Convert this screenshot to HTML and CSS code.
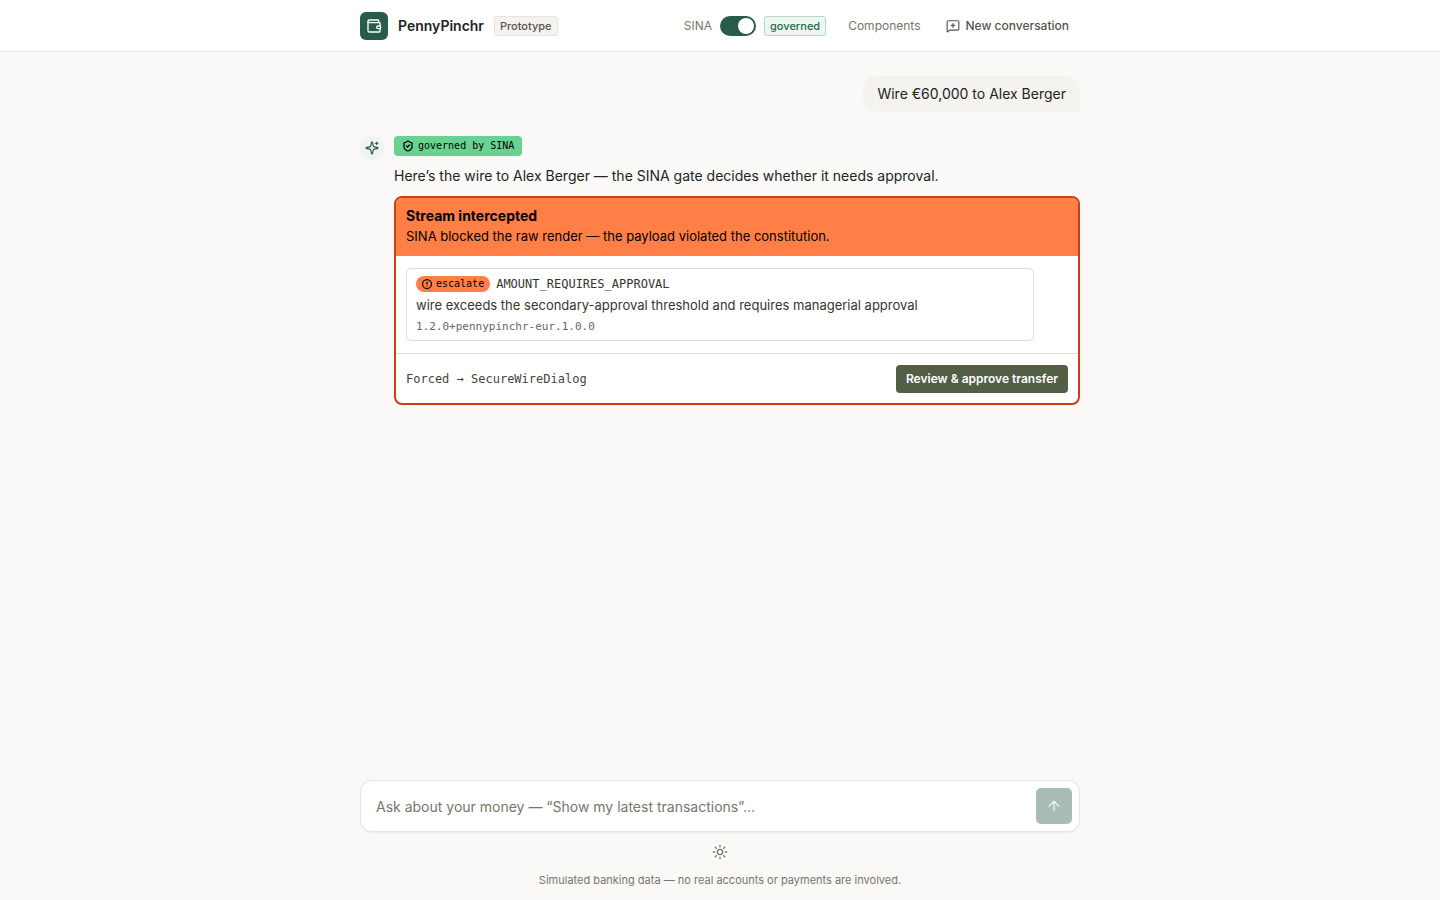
FILE: index.html
```html
<!DOCTYPE html>
<html lang="en">
<head>
<meta charset="utf-8">
<meta name="viewport" content="width=device-width, initial-scale=1">
<title>PennyPinchr</title>
<link rel="stylesheet" href="styles.css">
</head>
<body>
<header class="topbar">
  <div class="column topbar-inner">
    <span class="logo">
      <svg class="icon" width="16" height="16" viewBox="0 0 24 24"><path d="M19 7V4a1 1 0 0 0-1-1H5a2 2 0 0 0 0 4h15a1 1 0 0 1 1 1v4h-3a2 2 0 0 0 0 4h3a1 1 0 0 0 1-1v-2a1 1 0 0 0-1-1"/><path d="M3 5v14a2 2 0 0 0 2 2h15a1 1 0 0 0 1-1v-4"/></svg>
    </span>
    <span class="brand">PennyPinchr</span>
    <span class="tag">Prototype</span>
    <nav class="actions">
      <label class="switch-label" for="sina">SINA</label>
      <input class="switch" id="sina" type="checkbox" role="switch" checked>
      <span class="tag tag-green">governed</span>
      <a class="nav-link" href="#components">Components</a>
      <button class="new-chat" type="button">
        <svg class="icon" width="14" height="14" viewBox="0 0 24 24"><path d="M22 17a2 2 0 0 1-2 2H6.800a2 2 0 0 0-1.400.600l-2.200 2.200A.7.7 0 0 1 2 21.300V5a2 2 0 0 1 2-2h16a2 2 0 0 1 2 2zM12 8v6M9 11h6"/></svg>
        New conversation
      </button>
    </nav>
  </div>
</header>
<main class="column chat">
  <p class="user-message">Wire €60,000 to Alex Berger</p>
  <section class="reply">
    <span class="avatar">
      <svg class="icon" width="14" height="14" viewBox="0 0 24 24"><path d="M11 2.800a1 1 0 0 1 2 0l1.100 5.600a2 2 0 0 0 1.600 1.600l5.500 1a1 1 0 0 1 0 2l-5.500 1a2 2 0 0 0-1.600 1.600L13 21.200a1 1 0 0 1-2 0l-1.100-5.600A2 2 0 0 0 8.300 14l-5.500-1a1 1 0 0 1 0-2l5.500-1a2 2 0 0 0 1.600-1.600zM20 2v4M22 4h-4"/></svg>
    </span>
    <div class="reply-body">
      <span class="governed-badge">
        <svg class="icon icon-bold" width="12" height="12" viewBox="0 0 24 24"><path d="M20 13c0 5-3.500 7.500-7.700 9a1 1 0 0 1-.6 0C7.500 20.500 4 18 4 13V6a1 1 0 0 1 1-1c2 0 4.500-1.200 6.200-2.700a1.200 1.200 0 0 1 1.600 0C14.500 3.800 17 5 19 5a1 1 0 0 1 1 1zM9 12l2 2 4-4"/></svg>
        governed by SINA
      </span>
      <p class="reply-text">Here’s the wire to Alex Berger — the SINA gate decides whether it needs approval.</p>
      <article class="card">
        <header class="card-head">
          <h2 class="card-title">Stream intercepted</h2>
          <p class="card-sub">SINA blocked the raw render — the payload violated the constitution.</p>
        </header>
        <div class="card-main">
          <div class="violation">
            <div class="violation-head">
              <span class="severity">
                <svg class="icon icon-bold" width="12" height="12" viewBox="0 0 24 24"><circle cx="12" cy="12" r="9"/><path d="M12 8v4M12 16v0"/></svg>
                escalate
              </span>
              <code class="code">AMOUNT_REQUIRES_APPROVAL</code>
            </div>
            <p class="reason">wire exceeds the secondary-approval threshold and requires managerial approval</p>
            <code class="version">1.2.0+pennypinchr-eur.1.0.0</code>
          </div>
        </div>
        <footer class="card-foot">
          <code class="forced">Forced → SecureWireDialog</code>
          <button class="approve" type="button">Review &amp; approve transfer</button>
        </footer>
      </article>
    </div>
  </section>
</main>
<footer class="column bottom">
  <form class="composer">
    <input class="prompt" type="text" aria-label="Message" placeholder="Ask about your money — “Show my latest transactions”…">
    <button class="send" type="button" aria-label="Send">
      <svg class="icon" width="16" height="16" viewBox="0 0 24 24"><path d="m5 12 7-7 7 7M12 19V5"/></svg>
    </button>
  </form>
  <button class="theme" type="button" aria-label="Toggle theme">
    <svg class="icon" width="16" height="16" viewBox="0 0 24 24"><circle cx="12" cy="12" r="4"/><path d="M12 2v2M12 20v2M4.900 4.900l1.400 1.400M17.700 17.700l1.400 1.400M2 12h2M20 12h2M6.300 17.700l-1.400 1.400M19.100 4.900l-1.400 1.400"/></svg>
  </button>
  <p class="disclaimer">Simulated banking data — no real accounts or payments are involved.</p>
</footer>
</body>
</html>
```
FILE: styles.css
```css
* { box-sizing: border-box; }
body {
  margin: 0;
  min-height: 100vh;
  display: flex;
  flex-direction: column;
  background: #faf9f7;
  color: #23231f;
  font-family: Inter, "Liberation Sans", sans-serif;
}
p, h2 { margin: 0; }
button, input { font: inherit; }
button { border: 0; background: none; cursor: pointer; }
code, .governed-badge, .severity { font-family: "DejaVu Sans Mono", "Liberation Mono", monospace; }
.icon {
  flex: none;
  fill: none;
  stroke: currentColor;
  stroke-width: 2;
  stroke-linecap: round;
  stroke-linejoin: round;
}
.icon-bold { stroke-width: 2.5; }
.column { width: 100%; max-width: 752px; margin: 0 auto; padding: 0 16px; }

.topbar { background: #fff; border-bottom: 1px solid #e5e4df; }
.topbar-inner { display: flex; align-items: center; padding-top: 12px; padding-bottom: 11px; }
.logo {
  display: grid;
  place-items: center;
  width: 28px;
  height: 28px;
  border-radius: 6px;
  background: #285b49;
  color: #fff;
}
.brand { margin: 0 10px; font-size: 14px; line-height: 20px; font-weight: 600; }
.tag {
  padding: 0 5px;
  border: 1px solid #e5e4df;
  border-radius: 3px;
  background: #f4f3f0;
  color: #55554c;
  font-size: 11px;
  line-height: 18px;
  font-weight: 500;
}
.tag-green { border-color: #b5d8c6; background: #eef6f2; color: #216b49; }
.actions { display: flex; align-items: center; margin-left: auto; font-size: 12px; line-height: 16px; }
.switch-label { color: #77766c; }
.switch {
  appearance: none;
  display: flex;
  align-items: center;
  justify-content: flex-start;
  width: 36px;
  height: 20px;
  margin: 0 8px;
  padding: 2px;
  border-radius: 10px;
  background: #b9b8b0;
  cursor: pointer;
}
.switch::before { content: ""; width: 16px; height: 16px; border-radius: 50%; background: #fff; }
.switch:checked { justify-content: flex-end; background: #285b49; }
.nav-link { margin-left: 22px; color: #77766c; text-decoration: none; }
.new-chat {
  display: flex;
  align-items: center;
  gap: 6px;
  margin-left: 14px;
  padding: 0 11px;
  color: #55554c;
  font-weight: 500;
}

.chat { flex: 1; display: flex; flex-direction: column; gap: 24px; padding-top: 24px; padding-bottom: 24px; }
.user-message {
  align-self: flex-end;
  padding: 8px 14px;
  border-radius: 14px 14px 4px 14px;
  background: #f4f3f0;
  font-size: 14px;
  line-height: 20px;
}
.reply { display: flex; gap: 10px; }
.avatar {
  flex: none;
  display: grid;
  place-items: center;
  width: 24px;
  height: 24px;
  border-radius: 50%;
  background: #edf4f1;
  color: #285b49;
}
.reply-body { flex: 1; min-width: 0; display: flex; flex-direction: column; align-items: flex-start; }
.governed-badge {
  display: flex;
  align-items: center;
  gap: 4px;
  padding: 0 8px;
  border-radius: 4px;
  background: #68d391;
  color: #000;
  font-size: 10px;
  line-height: 20px;
}
.reply-text { margin: 10px 0; font-size: 14px; line-height: 20px; }
.card {
  align-self: stretch;
  overflow: hidden;
  border: 2px solid #cb3f0c;
  border-radius: 8px;
  background: #fff;
}
.card-head { padding: 8px 10px; background: #ff7f47; color: #000; }
.card-title { font-size: 14px; line-height: 20px; font-weight: 700; }
.card-sub { padding-bottom: 2px; font-size: 13px; line-height: 20px; }
.card-main { padding: 12px 10px; }
.violation {
  max-width: 628px;
  padding: 7px 9px 5px;
  border: 1px solid #dcddd6;
  border-radius: 5px;
}
.violation-head { display: flex; align-items: center; gap: 6px; }
.severity {
  display: flex;
  align-items: center;
  gap: 3px;
  padding: 0 6px 0 5px;
  border-radius: 8px;
  background: #ff7f47;
  color: #000;
  font-size: 10px;
  line-height: 16px;
}
.code { color: #34362e; font-size: 12px; line-height: 16px; }
.reason { margin: 3px 0 4px; color: #34362e; font-size: 13px; line-height: 20px; }
.version { display: block; color: #66675f; font-size: 11px; line-height: 16px; }
.card-foot {
  display: flex;
  align-items: center;
  justify-content: space-between;
  padding: 11px 10px 10px;
  border-top: 1px solid #dcddd6;
}
.forced { color: #44463c; font-size: 12px; line-height: 16px; }
.approve {
  padding: 6px 10px;
  border-radius: 4px;
  background: #525e46;
  color: #fff;
  font-size: 12px;
  line-height: 16px;
  font-weight: 600;
}

.bottom { display: flex; flex-direction: column; align-items: center; padding-bottom: 12px; }
.composer {
  display: flex;
  align-self: stretch;
  gap: 8px;
  padding: 7px;
  border: 1px solid #e5e4df;
  border-radius: 12px;
  background: #fff;
  box-shadow: 0 1px 2px rgba(0, 0, 0, 0.06);
}
.prompt { flex: 1; min-width: 0; padding: 0 8px; border: 0; outline: 0; background: none; font-size: 14px; }
.prompt::placeholder { color: #77766c; opacity: 1; }
.send {
  display: grid;
  place-items: center;
  width: 36px;
  height: 36px;
  padding: 0;
  border-radius: 5px;
  background: #a8bdb5;
  color: #eff3f1;
}
.theme { display: grid; margin: 12px 0; padding: 0; color: #77766c; }
.disclaimer { color: #77766c; font-size: 11px; line-height: 16px; }
```
